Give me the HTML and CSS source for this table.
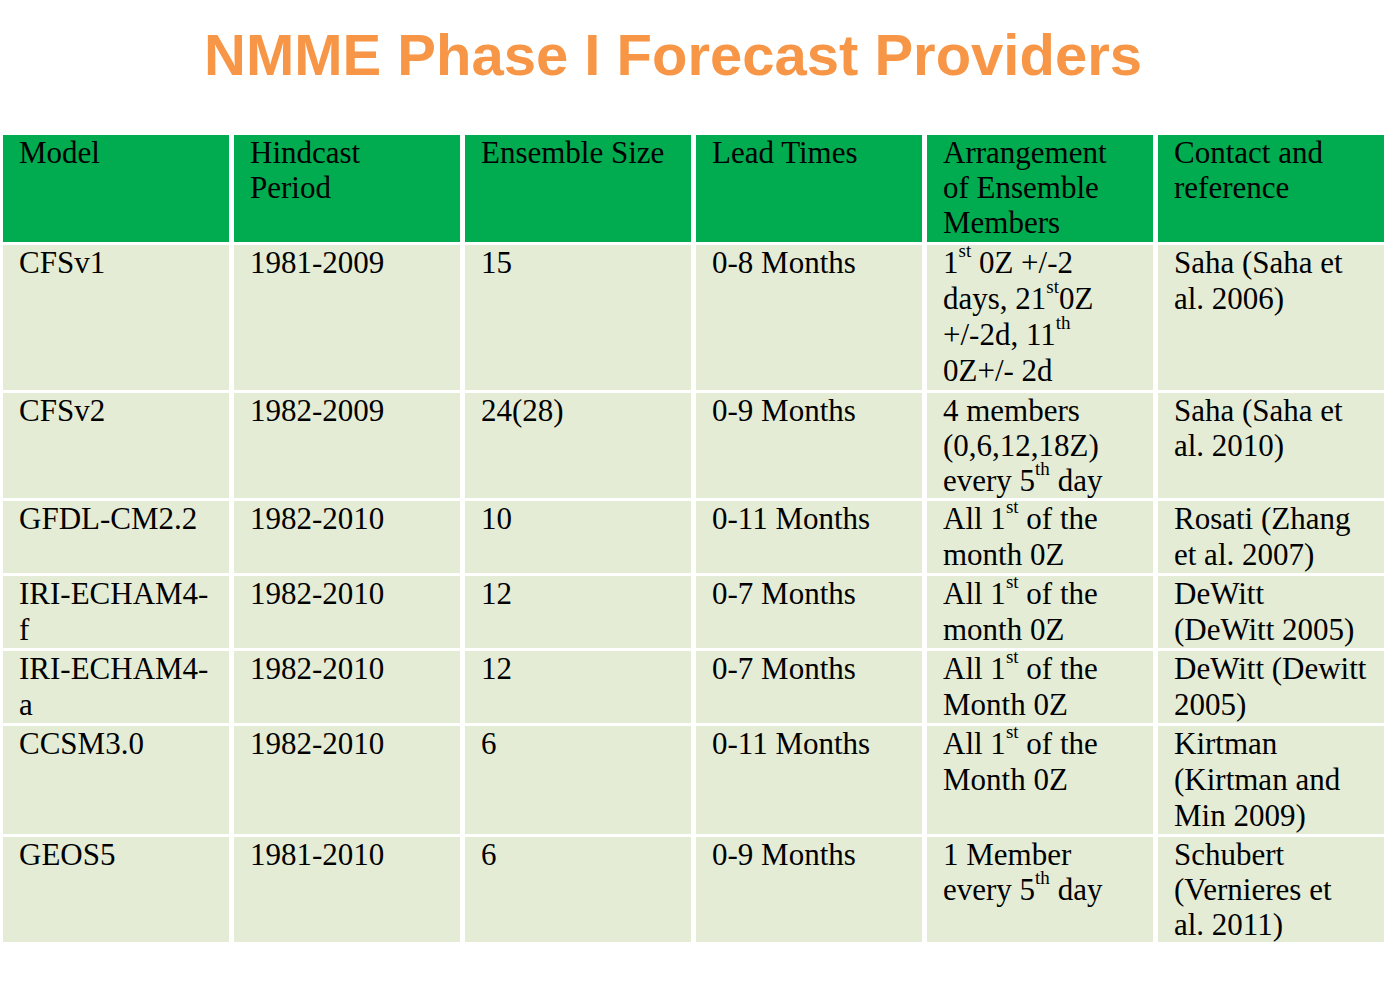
FILE: index.html
```html
<!DOCTYPE html>
<html lang="en">
<head>
<meta charset="utf-8">
<title>NMME Phase I Forecast Providers</title>
<link rel="stylesheet" href="styles.css">
</head>
<body>
<h1 class="title">NMME Phase I Forecast Providers</h1>
<div class="grid">
  <div class="cell head tight">Model</div>
  <div class="cell head tight">Hindcast<br>Period</div>
  <div class="cell head tight">Ensemble Size</div>
  <div class="cell head tight">Lead Times</div>
  <div class="cell head tight">Arrangement<br>of Ensemble<br>Members</div>
  <div class="cell head tight">Contact and<br>reference</div>

  <div class="cell">CFSv1</div>
  <div class="cell">1981-2009</div>
  <div class="cell">15</div>
  <div class="cell">0-8 Months</div>
  <div class="cell">1<sup>st</sup> 0Z +/-2<br>days, 21<sup>st</sup>0Z<br>+/-2d, 11<sup>th</sup><br>0Z+/- 2d</div>
  <div class="cell">Saha (Saha et<br>al. 2006)</div>

  <div class="cell tight">CFSv2</div>
  <div class="cell tight">1982-2009</div>
  <div class="cell tight">24(28)</div>
  <div class="cell tight">0-9 Months</div>
  <div class="cell tight">4 members<br>(0,6,12,18Z)<br>every 5<sup>th</sup> day</div>
  <div class="cell tight">Saha (Saha et<br>al. 2010)</div>

  <div class="cell">GFDL-CM2.2</div>
  <div class="cell">1982-2010</div>
  <div class="cell">10</div>
  <div class="cell">0-11 Months</div>
  <div class="cell">All 1<sup>st</sup> of the<br>month 0Z</div>
  <div class="cell">Rosati (Zhang<br>et al. 2007)</div>

  <div class="cell">IRI-ECHAM4-<br>f</div>
  <div class="cell">1982-2010</div>
  <div class="cell">12</div>
  <div class="cell">0-7 Months</div>
  <div class="cell">All 1<sup>st</sup> of the<br>month 0Z</div>
  <div class="cell">DeWitt<br>(DeWitt 2005)</div>

  <div class="cell">IRI-ECHAM4-<br>a</div>
  <div class="cell">1982-2010</div>
  <div class="cell">12</div>
  <div class="cell">0-7 Months</div>
  <div class="cell">All 1<sup>st</sup> of the<br>Month 0Z</div>
  <div class="cell">DeWitt (Dewitt<br>2005)</div>

  <div class="cell">CCSM3.0</div>
  <div class="cell">1982-2010</div>
  <div class="cell">6</div>
  <div class="cell">0-11 Months</div>
  <div class="cell">All 1<sup>st</sup> of the<br>Month 0Z</div>
  <div class="cell">Kirtman<br>(Kirtman and<br>Min 2009)</div>

  <div class="cell tight">GEOS5</div>
  <div class="cell tight">1981-2010</div>
  <div class="cell tight">6</div>
  <div class="cell tight">0-9 Months</div>
  <div class="cell tight">1 Member<br>every 5<sup>th</sup> day</div>
  <div class="cell tight">Schubert<br>(Vernieres et<br>al. 2011)</div>
</div>
</body>
</html>
```
FILE: styles.css
```css
html, body {
  margin: 0;
  padding: 0;
  background: #ffffff;
}

.title {
  margin: 22px 0 47px 0;
  padding-right: 45px;
  text-align: center;
  font-family: "Liberation Sans", Arial, sans-serif;
  font-weight: bold;
  font-size: 58px;
  line-height: 66px;
  color: #f79646;
}

.grid {
  display: grid;
  grid-template-columns: repeat(6, 226px);
  grid-template-rows: 107px 145px 105px 72px 72px 72px 108px 105px;
  gap: 3px 5px;
  margin-left: 3px;
  font-family: "Liberation Serif", "Times New Roman", serif;
  font-size: 31px;
  line-height: 36px;
  color: #000000;
}

.cell {
  background: #e4ecd6;
  padding-left: 16px;
  white-space: nowrap;
}

.cell.tight {
  line-height: 35px;
}

.cell.head {
  background: #00ac4f;
}

.cell sup {
  font-size: 19px;
  line-height: 0;
  vertical-align: 16px;
}
```
